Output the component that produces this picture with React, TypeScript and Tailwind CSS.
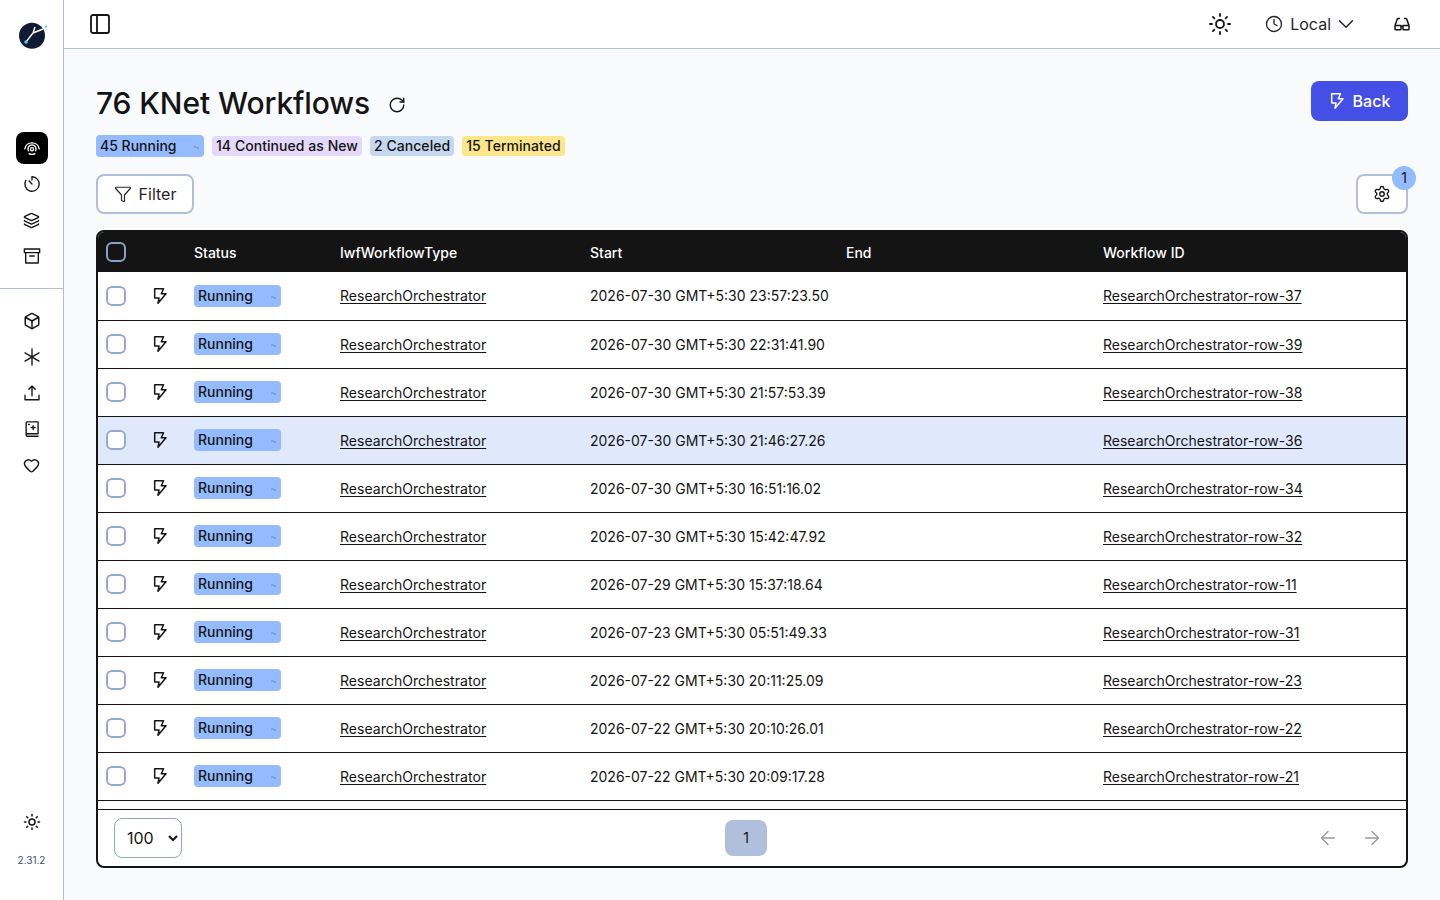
import { ArrowLeft, ArrowRight, Box, ChevronDown, Clock, Filter, Heart, Layers, PanelLeft, RotateCw, Settings, Sun } from "lucide-react";

const rows = [
  { start: "2026-07-30 GMT+5:30 23:57:23.50", id: "ResearchOrchestrator-row-37" },
  { start: "2026-07-30 GMT+5:30 22:31:41.90", id: "ResearchOrchestrator-row-39" },
  { start: "2026-07-30 GMT+5:30 21:57:53.39", id: "ResearchOrchestrator-row-38" },
  { start: "2026-07-30 GMT+5:30 21:46:27.26", id: "ResearchOrchestrator-row-36" },
  { start: "2026-07-30 GMT+5:30 16:51:16.02", id: "ResearchOrchestrator-row-34" },
  { start: "2026-07-30 GMT+5:30 15:42:47.92", id: "ResearchOrchestrator-row-32" },
  { start: "2026-07-29 GMT+5:30 15:37:18.64", id: "ResearchOrchestrator-row-11" },
  { start: "2026-07-23 GMT+5:30 05:51:49.33", id: "ResearchOrchestrator-row-31" },
  { start: "2026-07-22 GMT+5:30 20:11:25.09", id: "ResearchOrchestrator-row-23" },
  { start: "2026-07-22 GMT+5:30 20:10:26.01", id: "ResearchOrchestrator-row-22" },
  { start: "2026-07-22 GMT+5:30 20:09:17.28", id: "ResearchOrchestrator-row-21" },
];

function Bolt({ className }: { className?: string }) {
  return (
    <svg viewBox="0 0 16 16" fill="none" stroke="currentColor" strokeWidth="1.5" strokeLinejoin="round" className={className}>
      <path d="M2.7.8h8.8L9.3 5.8H14L6 15.2 7 10H2.7z" />
    </svg>
  );
}

function Icon({ children }: { children: React.ReactNode }) {
  return (
    <svg viewBox="0 0 16 16" fill="none" stroke="currentColor" strokeWidth="1.2" strokeLinecap="round" strokeLinejoin="round" className="h-[18px] w-[18px]">
      {children}
    </svg>
  );
}

function Logo() {
  return (
    <svg viewBox="0 0 32 32" className="h-8 w-8">
      <circle cx="16" cy="15.7" r="13" fill="#101b33" />
      <path d="M10 22l7-9 2-6M17 13l10-4" stroke="#fff" strokeWidth="1.4" fill="none" />
      <circle cx="10" cy="22" r="1.8" fill="#4cc9f0" />
      <circle cx="30" cy="6.5" r="1" fill="#22c3e6" />
    </svg>
  );
}

function SideItem({ children, active }: { children: React.ReactNode; active?: boolean }) {
  return (
    <div className={`flex h-8 w-8 items-center justify-center rounded-lg ${active ? "bg-black text-white" : "text-[#141414]"}`}>
      {children}
    </div>
  );
}

function Sidebar() {
  return (
    <aside className="flex w-16 shrink-0 flex-col border-r border-[#b0c0dc] bg-white">
      <div className="flex flex-col items-center gap-1 border-b border-[#b0c0dc] pb-4 pt-5">
        <div className="mb-[76px]">
          <Logo />
        </div>
        <SideItem active>
          <Icon>
            <circle cx="8" cy="9" r="1.4" />
            <path d="M4.8 10.5A3.6 3.6 0 1 1 11.2 10.5" />
            <path d="M1.6 8.8A6.5 6.5 0 0 1 14.4 8.8" />
            <path d="M5.5 13c1.5.8 3.5.8 5 0" />
          </Icon>
        </SideItem>
        <SideItem>
          <Icon>
            <path d="M8 1.6a6.4 6.4 0 1 1-5.5 3.2" />
            <path d="M8 4.4V1.6M8 8 5.4 5.4" />
          </Icon>
        </SideItem>
        <SideItem>
          <Layers className="h-[17px] w-[17px]" strokeWidth={2} />
        </SideItem>
        <SideItem>
          <Icon>
            <path d="M1.2 1.8h13.6v3.2H1.2zM2.4 5v9.2h11.2V5M6 8h4" />
          </Icon>
        </SideItem>
      </div>
      <div className="flex flex-col items-center gap-1 pt-4">
        <SideItem>
          <Box className="h-[18px] w-[18px]" strokeWidth={2} />
        </SideItem>
        <SideItem>
          <Icon>
            <path d="M8 .8v14.4M1.8 4.4l12.4 7.2M14.2 4.4 1.8 11.6" />
          </Icon>
        </SideItem>
        <SideItem>
          <Icon>
            <path d="M8 10.5V2M5.2 4.6 8 1.8l2.8 2.8M1.8 10v4h12.4v-4" />
          </Icon>
        </SideItem>
        <SideItem>
          <Icon>
            <path d="M2.8 12.4V2.4c0-.5.3-.8.8-.8h9.8v10.6H3.9a1.1 1.1 0 0 0 0 2.2h9.5" />
            <path d="M9 5v3.4M7.3 6.7h3.4M5 4h.6" />
          </Icon>
        </SideItem>
        <SideItem>
          <Heart className="h-[17px] w-[17px]" strokeWidth={2} />
        </SideItem>
      </div>
      <div className="mt-auto flex flex-col items-center gap-[14px] pb-8">
        <SideItem>
          <Sun className="h-[18px] w-[18px]" strokeWidth={2} />
        </SideItem>
        <span className="text-[10px] leading-4 text-[#3f4f78]">2.31.2</span>
      </div>
    </aside>
  );
}

function TopBar() {
  return (
    <header className="flex h-[49px] shrink-0 items-center justify-between border-b border-[#b0c0dc] bg-white pl-6 pr-[29px] text-[#141414]">
      <PanelLeft className="h-6 w-6" strokeWidth={1.8} />
      <div className="flex items-center">
        <Sun className="h-6 w-6" strokeWidth={1.8} />
        <div className="ml-[33px] flex items-center text-base text-[#27272a]">
          <Clock className="h-[18px] w-[18px]" strokeWidth={1.8} />
          <span className="ml-[7px]">Local</span>
          <ChevronDown className="ml-0.5 h-[26px] w-[26px]" strokeWidth={1.4} />
        </div>
        <div className="ml-[34px]">
          <svg viewBox="0 0 18 18" fill="none" stroke="currentColor" strokeWidth="1.5" strokeLinejoin="round" className="h-[18px] w-[18px]">
            <path d="M4.5 3.5h2.5M11 3.5h2.5M4.5 3.5 2 10.5M13.5 3.5l2.5 7M2 10.5h6v3.5a.8.8 0 0 1-.8.8H2.8a.8.8 0 0 1-.8-.8zM10 10.5h6v3.5a.8.8 0 0 1-.8.8h-4.4a.8.8 0 0 1-.8-.8zM8 11.5h2" />
          </svg>
        </div>
      </div>
    </header>
  );
}

function Checkbox({ dark }: { dark?: boolean }) {
  return <span className={`block h-5 w-5 rounded-md border-2 ${dark ? "border-[#8aa0c6]" : "border-[#94a9cc] bg-white"}`} />;
}

function Badge({ className, children }: { className: string; children: React.ReactNode }) {
  return <span className={`flex items-center rounded-sm px-1 text-sm font-medium text-[#141414] ${className}`}>{children}</span>;
}

function Wave() {
  return (
    <svg viewBox="0 0 6 3" className="mt-0.5 h-[3px] w-[5px] text-[#4f6489]" fill="none" stroke="currentColor" strokeWidth="0.8">
      <path d="M0 1.5c1-1 2-1 3 0s2 1 3 0" />
    </svg>
  );
}

function WorkflowRow({ start, id, first, hover }: { start: string; id: string; first: boolean; hover: boolean }) {
  return (
    <div
      className={`grid grid-cols-[96px_146px_250px_256px_257px_1fr] items-center border-b border-[#141414] text-sm text-[#141414] ${
        first ? "h-[49px]" : "h-12"
      } ${hover ? "bg-[#dfe9fb]" : "bg-white"}`}
    >
      <div className={`flex items-center gap-[26px] pl-2 ${first ? "" : "mb-px"}`}>
        <Checkbox />
        <Bolt className="h-4 w-4" />
      </div>
      <div className={first ? "" : "mb-px"}>
        <Badge className="h-[22px] w-[87px] justify-between bg-[#94bbff] pr-[5px]">
          Running
          <Wave />
        </Badge>
      </div>
      <a className="w-fit underline underline-offset-2 tracking-[0.05px]">ResearchOrchestrator</a>
      <div>{start}</div>
      <div />
      <a className="w-fit underline underline-offset-2">{id}</a>
    </div>
  );
}

function WorkflowTable() {
  return (
    <div className="mt-4 flex min-h-0 flex-1 flex-col overflow-hidden rounded-lg border-2 border-[#141414] bg-white">
      <div className="grid h-10 shrink-0 grid-cols-[96px_146px_250px_256px_257px_1fr] items-center bg-[#141414] text-sm font-medium text-white">
        <div className="pl-2">
          <Checkbox dark />
        </div>
        <div className="pt-0.5">Status</div>
        <div className="pt-0.5">IwfWorkflowType</div>
        <div className="pt-0.5">Start</div>
        <div className="pt-0.5">End</div>
        <div className="pt-0.5">Workflow ID</div>
      </div>
      <div className="min-h-0 flex-1 overflow-hidden">
        {rows.map((row, i) => (
          <WorkflowRow key={row.id} start={row.start} id={row.id} first={i === 0} hover={i === 3} />
        ))}
      </div>
      <div className="flex h-[57px] shrink-0 items-center justify-between border-t border-[#141414] pl-4 pr-4">
        <select defaultValue="100" className="h-10 w-[68px] rounded-lg border border-[#8fa5c8] bg-white pl-2 text-base text-[#141414]">
          <option>100</option>
        </select>
        <div className="flex h-9 w-[42px] items-center justify-center rounded-lg bg-[#b0c0dc] text-sm text-[#141414]">1</div>
        <div className="flex items-center gap-2 text-[#9a9a9a]">
          <div className="flex h-9 w-9 items-center justify-center">
            <ArrowLeft className="h-[22px] w-[22px]" strokeWidth={1.5} />
          </div>
          <div className="flex h-9 w-9 items-center justify-center">
            <ArrowRight className="h-[22px] w-[22px]" strokeWidth={1.5} />
          </div>
        </div>
      </div>
    </div>
  );
}

export default function App() {
  return (
    <div className="flex h-screen overflow-hidden bg-[#f8fafc] font-['Inter',sans-serif] text-[#141414]">
      <Sidebar />
      <div className="flex min-w-0 flex-1 flex-col">
        <TopBar />
        <main className="flex min-h-0 flex-1 flex-col px-8 pb-8 pt-8">
          <div className="flex h-10 items-center justify-between">
            <div className="flex translate-y-0.5 items-center gap-[18px]">
              <h1 className="text-[30px] font-medium leading-10 tracking-[-0.1px]">76 KNet Workflows</h1>
              <RotateCw className="mt-1 h-[18px] w-[18px]" strokeWidth={1.8} />
            </div>
            <button className="flex h-10 w-[97px] items-center justify-center gap-2 rounded-lg bg-[#444fe6] text-base font-medium text-white">
              <Bolt className="h-4 w-4" />
              Back
            </button>
          </div>
          <div className="mt-3.5 flex items-center gap-2">
            <Badge className="h-[22px] w-[108px] justify-between bg-[#94bbff] pr-[5px]">
              45 Running
              <Wave />
            </Badge>
            <Badge className="h-5 bg-[#e4d8fb] tracking-[0.05px]">14 Continued as New</Badge>
            <Badge className="h-5 bg-[#c5d8ef] tracking-[0.05px]">2 Canceled</Badge>
            <Badge className="h-5 bg-[#fde68a] tracking-[0.05px]">15 Terminated</Badge>
          </div>
          <div className="mt-[17px] flex items-center justify-between">
            <button className="flex h-10 w-[98px] items-center justify-center gap-[7px] rounded-lg border-2 border-[#b0c0dc] bg-white text-base text-[#27272a]">
              <Filter className="h-[18px] w-[18px]" strokeWidth={1.6} />
              Filter
            </button>
            <div className="relative">
              <button className="flex h-10 w-[52px] items-center justify-center rounded-lg border-2 border-[#b0c0dc] bg-white">
                <Settings className="h-[18px] w-[18px]" strokeWidth={1.8} />
              </button>
              <span className="absolute -right-2 -top-2 flex h-6 w-6 items-center justify-center rounded-full bg-[#94bbff] text-sm">1</span>
            </div>
          </div>
          <WorkflowTable />
        </main>
      </div>
    </div>
  );
}
